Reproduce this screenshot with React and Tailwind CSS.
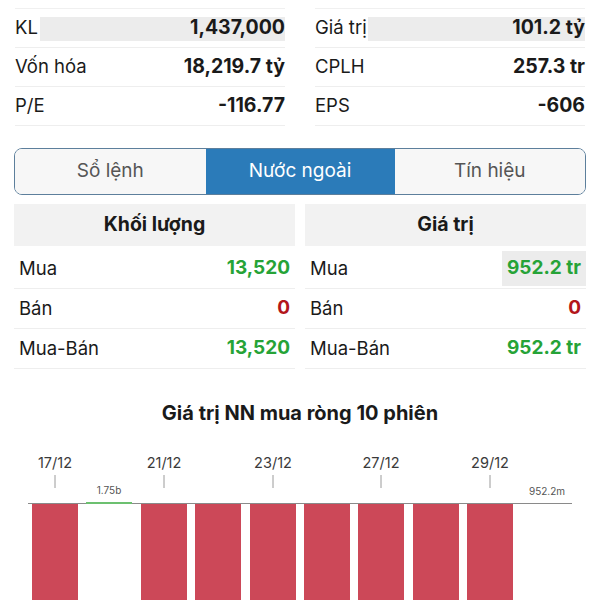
import React from "react";

const font = { fontFamily: "Inter, 'Liberation Sans', sans-serif" };

const statsLeft = [
    { label: "KL", value: "1,437,000", hl: "left-[25px]" },
    { label: "Vốn hóa", value: "18,219.7 tỷ" },
    { label: "P/E", value: "-116.77" },
];

const statsRight = [
    { label: "Giá trị", value: "101.2 tỷ", hl: "left-[53px]" },
    { label: "CPLH", value: "257.3 tr" },
    { label: "EPS", value: "-606" },
];

const StatColumn = ({ rows }) => (
    <div className="w-[270px] border-t border-[#f0f0f0]">
        {rows.map((r, i) => (
            <div key={i} className="relative h-[39px] flex items-center justify-between border-b border-[#eeeeee]">
                {r.hl && <div className={`absolute ${r.hl} right-0 top-[8px] h-[24px] bg-[#ececec]`} />}
                <span className="relative text-[18.5px] text-[#1a1a1a]">{r.label}</span>
                <span className="relative text-[19.5px] font-bold text-[#1a1a1a]">{r.value}</span>
            </div>
        ))}
    </div>
);

const FlowTable = ({ title, rows }) => (
    <div className="w-[281px]">
        <div className="h-[42px] bg-[#f2f2f2] flex items-center justify-center text-[19.5px] font-bold text-[#1a1a1a]">
            {title}
        </div>
        <div className="mt-[3px]">
            {rows.map((r, i) => (
                <div key={i} className="h-[40px] flex items-center justify-between pl-[5px] pr-[5px] border-b border-[#eeeeee]">
                    <span className="text-[18.5px] text-[#1a1a1a]">{r.label}</span>
                    <span className={`text-[19px] font-bold px-[5px] py-[3px] -mr-[5px] ${r.color} ${r.hl ? "bg-[#ececec]" : ""}`}>
                        {r.value}
                    </span>
                </div>
            ))}
        </div>
    </div>
);

const bars = [
    { x: 32, pos: false },
    { x: 86, pos: true, label: "1.75b" },
    { x: 141, pos: false },
    { x: 195, pos: false },
    { x: 250, pos: false },
    { x: 304, pos: false },
    { x: 358, pos: false },
    { x: 413, pos: false },
    { x: 467, pos: false },
];

const ticks = [
    { x: 55, label: "17/12" },
    { x: 164, label: "21/12" },
    { x: 273, label: "23/12" },
    { x: 381, label: "27/12" },
    { x: 490, label: "29/12" },
];

const Chart = () => (
    <svg width="600" height="170" viewBox="0 0 600 170" className="block">
        {ticks.map((t) => (
            <g key={t.label}>
                <text x={t.x} y={28} textAnchor="middle" fontSize="14.5" fill="#3a3a3a" style={font}>{t.label}</text>
                <line x1={t.x} y1={35} x2={t.x} y2={48} stroke="#9a9a9a" strokeWidth="1" />
            </g>
        ))}
        <line x1={28} y1={63.5} x2={572} y2={63.5} stroke="#8a8a8a" strokeWidth="1" />
        {bars.map((b, i) =>
            b.pos ? (
                <g key={i}>
                    <rect x={b.x} y={62} width={46} height={2} fill="#6cc070" />
                    <text x={b.x + 23} y={54} textAnchor="middle" fontSize="10" fill="#555" style={font}>{b.label}</text>
                </g>
            ) : (
                <rect key={i} x={b.x} y={64} width={46} height={110} fill="#cc4858" />
            )
        )}
        <text x={547} y={55} textAnchor="middle" fontSize="10" fill="#555" style={font}>952.2m</text>
    </svg>
);

export default function App() {
    return (
        <div className="w-[600px] h-[600px] overflow-hidden bg-white" style={font}>
            <div className="pt-[8px] px-[15px] flex justify-between">
                <StatColumn rows={statsLeft} />
                <StatColumn rows={statsRight} />
            </div>

            <div className="mt-[22px] mx-[14px] h-[47px] flex border border-[#5d7f9c] rounded-[8px] overflow-hidden">
                <div className="flex-1 flex items-center justify-center bg-[#f7f7f7] text-[19px] text-[#555]">Sổ lệnh</div>
                <div className="w-[189px] flex items-center justify-center bg-[#2b7bb9] text-[19px] text-white">Nước ngoài</div>
                <div className="flex-1 flex items-center justify-center bg-[#f7f7f7] text-[19px] text-[#555]">Tín hiệu</div>
            </div>

            <div className="mt-[9px] mx-[14px] flex justify-between">
                <FlowTable
                    title="Khối lượng"
                    rows={[
                        { label: "Mua", value: "13,520", color: "text-[#26a337]" },
                        { label: "Bán", value: "0", color: "text-[#b3161b]" },
                        { label: "Mua-Bán", value: "13,520", color: "text-[#26a337]" },
                    ]}
                />
                <FlowTable
                    title="Giá trị"
                    rows={[
                        { label: "Mua", value: "952.2 tr", color: "text-[#26a337]", hl: true },
                        { label: "Bán", value: "0", color: "text-[#b3161b]" },
                        { label: "Mua-Bán", value: "952.2 tr", color: "text-[#26a337]" },
                    ]}
                />
            </div>

            <div className="mt-[29px] text-center text-[20px] font-bold text-[#1a1a1a]">
                Giá trị NN mua ròng 10 phiên
            </div>
            <div className="mt-[12px]">
                <Chart />
            </div>
        </div>
    );
}
